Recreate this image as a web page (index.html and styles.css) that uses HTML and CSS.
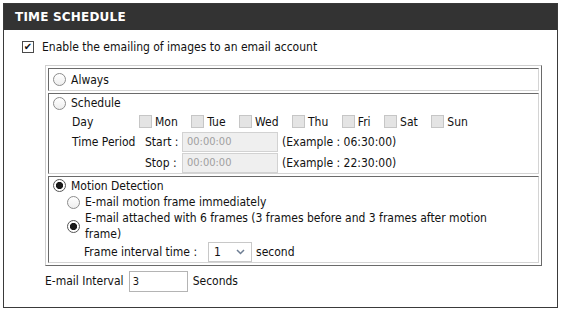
FILE: index.html
```html
<!DOCTYPE html>
<html>
	<head>
		<title>time schedule</title>
		<meta charset="utf-8"/>
		<link rel="stylesheet" href="styles.css">
	</head>
	<body>
		<div class="panel">
			<div class="panelHead">TIME SCHEDULE</div>
			<div class="panelBody">
				<label class="enable"><input type="checkbox" class="cb" checked>Enable the emailing of images to an email account</label>
				<table class="opts">
					<tr>
						<td class="cellAlways">
							<label class="opt"><input type="radio" class="rd" name="mode">Always</label>
						</td></tr>
					<tr>
						<td class="cellSched">
							<label class="opt schedLine"><input type="radio" class="rd" name="mode">Schedule</label>
							<div class="schedGrid">
								<div class="rowLabel dayRow">Day</div>
								<div class="days">
									<label class="day"><input type="checkbox" class="cbOff" disabled>Mon</label>
									<label class="day"><input type="checkbox" class="cbOff" disabled>Tue</label>
									<label class="day"><input type="checkbox" class="cbOff" disabled>Wed</label>
									<label class="day"><input type="checkbox" class="cbOff" disabled>Thu</label>
									<label class="day"><input type="checkbox" class="cbOff" disabled>Fri</label>
									<label class="day"><input type="checkbox" class="cbOff" disabled>Sat</label>
									<label class="day"><input type="checkbox" class="cbOff" disabled>Sun</label>
								</div>
								<div class="rowLabel tpRow">Time Period</div>
								<div class="tp">
									<span class="tpLabel">Start :</span>
									<input class="txtOff" value="00:00:00" disabled>
									<span>(Example : 06:30:00)</span>
								</div>
								<div class="rowLabel tpRow"></div>
								<div class="tp">
									<span class="tpLabel">Stop :</span>
									<input class="txtOff" value="00:00:00" disabled>
									<span>(Example : 22:30:00)</span>
								</div>
							</div>
						</td></tr>
					<tr>
						<td class="cellMotion">
							<label class="opt motionLine"><input type="radio" class="rd" name="mode" checked>Motion Detection</label>
							<label class="sub subOne"><input type="radio" class="rd" name="how">E-mail motion frame immediately</label>
							<label class="sub subTwo"><input type="radio" class="rd" name="how" checked><span class="subText">E-mail attached with 6 frames (3 frames before and 3 frames after motion frame)</span></label>
							<div class="frameRow">
								Frame interval time :
								<span class="sel">1<svg width="9" height="6" viewBox="0 0 9 6"><path d="M1 1 L4.5 4.5 L8 1" fill="none" stroke="#6d7d93" stroke-width="1.5"/></svg></span>
								second
							</div>
						</td></tr>
				</table>
				<div class="interval">
					E-mail Interval
					<input class="txt" value="3">
					Seconds
				</div>
			</div>
		</div>
	</body>
</html>
```

FILE: styles.css
```css
body {
	margin: 0px;
	background: #ffffff;
	color: #111111;
	font-family: "DejaVu Sans Condensed", "DejaVu Sans", sans-serif;
	font-size: 12px;
}

.panel {
	margin: 3px 0 0 3px;
	width: 553px;
	height: 303px;
	border: 1px solid #3a3a3a;
}
.panelHead {
	background: #333333;
	color: #ffffff;
	font-family: "DejaVu Sans", sans-serif;
	font-weight: bold;
	font-size: 12px;
	letter-spacing: 0.2px;
	height: 25px;
	line-height: 25px;
	padding: 1px 0 0 11px;
}
.panelBody {
	padding-left: 18px;
}

.enable {
	display: flex;
	align-items: center;
	height: 20px;
	margin-top: 7px;
}

/* form controls */
.cb {
	appearance: none;
	-webkit-appearance: none;
	width: 12px;
	height: 12px;
	margin: 0 8px 0 0;
	border: 1px solid #4a4a4a;
	background: #ffffff;
	flex: none;
}
.cb:checked::after {
	content: "\2714";
	display: block;
	font-family: "DejaVu Sans", sans-serif;
	font-size: 10px;
	line-height: 10px;
	text-align: center;
	color: #111;
}
.cbOff {
	appearance: none;
	-webkit-appearance: none;
	width: 13px;
	height: 13px;
	margin: 0 3px 0 0;
	border: 1px solid #c6c6c6;
	background: #e4e4e4;
	flex: none;
}
.rd {
	appearance: none;
	-webkit-appearance: none;
	width: 13px;
	height: 13px;
	margin: 0 5px 0 0;
	border: 1px solid #8c8c8c;
	border-radius: 50%;
	background: linear-gradient(#ffffff, #eeeeee);
	flex: none;
}
.rd:checked {
	border-color: #555;
	background: radial-gradient(circle, #1a1a1a 0, #1a1a1a 3.3px, #ffffff 3.9px);
}
.txtOff, .txt {
	box-sizing: border-box;
	font-family: inherit;
	margin: 0;
	outline: none;
}
.txtOff {
	width: 96px;
	height: 20px;
	border: 1px solid #d2d2d2;
	background: #efefef;
	color: #a0a0a0;
	font-size: 11px;
	padding: 0 0 0 4px;
	margin-right: 4px;
}
.txt {
	width: 59px;
	height: 21px;
	border: 1px solid #b4b4b4;
	background: #fff;
	color: #151515;
	font-size: 11px;
	padding: 0 0 0 3px;
	margin: 0 5px 0 5px;
}

/* options table */
.opts {
	margin: 8px 0 0 23px;
	width: 497px;
	border-spacing: 2px;
	border: 1px solid;
	border-color: #cfcfcf #6a6a6a #6a6a6a #cfcfcf;
}
.opts td {
	border: 1px solid;
	border-color: #6a6a6a #d4d4d4 #d4d4d4 #6a6a6a;
	padding: 0 4px;
	vertical-align: top;
}
.opt, .sub {
	display: flex;
	align-items: center;
}
.cellAlways {
	height: 21px;
}
.cellAlways .opt {
	height: 21px;
}
.schedLine { height: 18px; }
.schedGrid {
	display: grid;
	grid-template-columns: 67px auto;
	margin-left: 19px;
}
.rowLabel {
	display: flex;
	align-items: center;
}
.dayRow, .days { height: 19px; }
.tpRow, .tp { height: 21px; }
.days, .tp {
	display: flex;
	align-items: center;
}
.day {
	display: flex;
	align-items: center;
	margin-right: 13.5px;
}
.tp {
	padding-left: 6px;
}
.tpLabel {
	width: 37px;
}

.motionLine { height: 17px; }
.sub {
	margin-left: 14px;
}
.subOne { height: 16px; }
.subTwo {
	height: 32px;
	width: 440px;
}
.subText {
	line-height: 16px;
}
.frameRow {
	display: flex;
	align-items: center;
	height: 20px;
	margin-left: 31px;
}
.sel {
	box-sizing: border-box;
	display: flex;
	align-items: center;
	justify-content: space-between;
	width: 44px;
	height: 20px;
	margin: 0 4px 0 11px;
	padding: 0 6px 0 5px;
	border: 1px solid #c8c8c8;
	background: #fff;
}

.interval {
	display: flex;
	align-items: center;
	height: 22px;
	margin: 4px 0 0 23px;
}
```
